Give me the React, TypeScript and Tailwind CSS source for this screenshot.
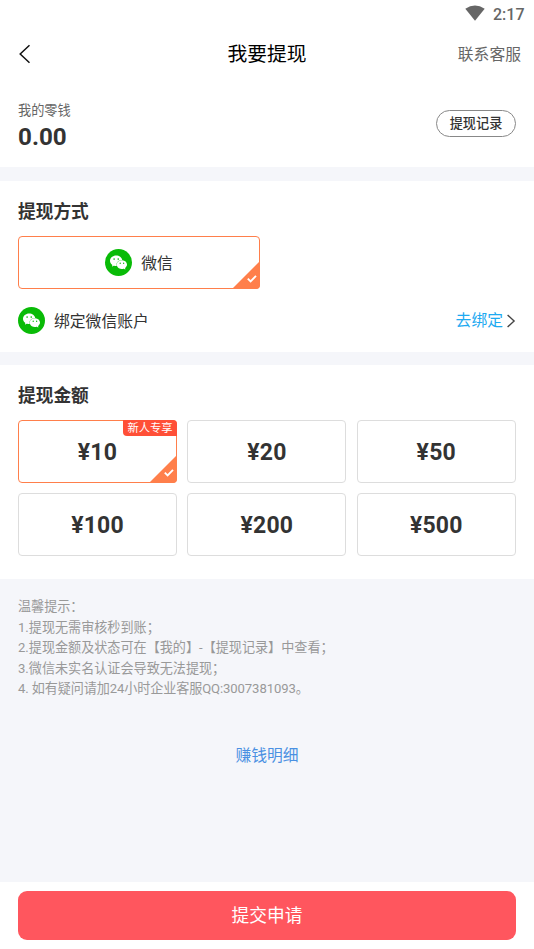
import { SiWechat } from 'react-icons/si';

const amounts = [10, 20, 50, 100, 200, 500];

const tips = [
  '温馨提示：',
  '1.提现无需审核秒到账；',
  '2.提现金额及状态可在【我的】-【提现记录】中查看；',
  '3.微信未实名认证会导致无法提现；',
  '4. 如有疑问请加24小时企业客服QQ:3007381093。',
];

function WechatIcon() {
  return (
    <span className="flex h-[27px] w-[27px] shrink-0 items-center justify-center rounded-full bg-[#09bb07] text-white">
      <SiWechat className="h-[17px] w-[17px]" />
    </span>
  );
}

// Selected marker in the bottom right corner of a card
function CornerCheck() {
  return (
    <svg className="absolute -right-px -bottom-px h-7 w-7" viewBox="0 0 28 28" fill="none">
      <path d="M28 0V24Q28 28 24 28H0Z" fill="#ff7f4b" />
      <path d="M15.8 17.6L18.6 20.4L24 14.9" stroke="#fff" strokeWidth="1.9" />
    </svg>
  );
}

export default function App() {
  return (
    <div className="flex h-[949px] w-[534px] flex-col overflow-hidden bg-white font-['Roboto','Noto_Sans_CJK_SC',sans-serif] text-[#333]">
      {/* Status bar */}
      <div className="flex h-7 shrink-0 items-center justify-end gap-2 pr-[9.5px] text-[#666]">
        <svg className="mb-0.5 h-4 w-5" viewBox="0 0 20 16">
          <path d="M0.3 3.8Q10 -3 19.7 3.8L10 15.8Z" fill="#666" />
        </svg>
        <span className="pt-0.5 text-[16px] leading-7 font-medium">2:17</span>
      </div>

      {/* Header */}
      <header className="grid h-[52px] shrink-0 grid-cols-[1fr_auto_1fr] items-center px-[18px]">
        <button className="w-4">
          <svg className="h-5 w-3" viewBox="0 0 12 20" fill="none">
            <path d="M11.5 1.2L2.2 10L11.5 18.7" stroke="#111" strokeWidth="1.5" />
          </svg>
        </button>
        <h1 className="pt-0.5 text-center text-[19.8px] text-black">我要提现</h1>
        <span className="-mr-[5px] pt-0.5 text-right text-[15.8px] text-[#666]">联系客服</span>
      </header>

      {/* Balance */}
      <section className="flex h-[87px] shrink-0 items-center justify-between px-[18px]">
        <div className="pt-[7px]">
          <p className="text-[13.2px] leading-5 text-[#666]">我的零钱</p>
          <p className="text-[24.2px] leading-[33px] font-bold">0.00</p>
        </div>
        <button className="h-[27px] w-20 rounded-full border border-[#888] text-[13.2px] font-medium">提现记录</button>
      </section>

      <div className="h-[14px] shrink-0 bg-[#f5f6fa]" />

      {/* Method */}
      <section className="h-[171px] shrink-0 px-[18px] pt-[18px]">
        <h2 className="text-[17.7px] leading-[26px] font-bold">提现方式</h2>
        <div className="relative mt-[11px] flex h-[53px] w-[242px] items-center justify-center gap-[9px] rounded border border-[#ff7f4b]">
          <WechatIcon />
          <span className="pt-0.5 text-[15.8px]">微信</span>
          <CornerCheck />
        </div>
        <div className="mt-[18px] flex h-[27px] items-center">
          <WechatIcon />
          <span className="ml-[9px] pt-[3px] text-[15.8px]">绑定微信账户</span>
          <span className="ml-auto text-[15.8px] text-[#1eaaf1]">去绑定</span>
          <svg className="ml-1 h-[14px] w-[9px]" viewBox="0 0 9 14" fill="none">
            <path d="M0.6 1L7.1 7L0.6 13" stroke="#444" strokeWidth="1.4" />
          </svg>
        </div>
      </section>

      <div className="h-[13px] shrink-0 bg-[#f5f6fa]" />

      {/* Amounts */}
      <section className="h-[214px] shrink-0 px-[18px] pt-[18px]">
        <h2 className="text-[17.7px] leading-[26px] font-bold">提现金额</h2>
        <div className="mt-[11px] grid grid-cols-[159px_159px_159px] gap-x-[10.4px] gap-y-[10px]">
          {amounts.map((amount, i) => (
            <div
              key={amount}
              className={`relative flex h-[63px] items-center justify-center rounded border ${i === 0 ? 'border-[#ff7f4b]' : 'border-[#ddd]'}`}
            >
              <span className="pt-[3px] text-[23px] font-bold tracking-[0.2px]">¥{amount}</span>
              {i === 0 && (
                <>
                  <span className="absolute -top-px -right-px h-4 w-[54px] rounded-tr rounded-bl bg-[#ff4f37] text-center text-[11.3px] leading-[17px] text-white">
                    新人专享
                  </span>
                  <CornerCheck />
                </>
              )}
            </div>
          ))}
        </div>
      </section>

      {/* Tips */}
      <section className="flex-1 bg-[#f5f6fa] px-[18px] pt-[18px]">
        <div className="text-[13.1px] leading-[20.5px] text-[#999]">
          {tips.map((tip) => (
            <p key={tip} className="last:tracking-[-0.1px]">{tip}</p>
          ))}
        </div>
        <p className="mt-11 text-center text-[15.8px] leading-6 text-[#4a90e2]">赚钱明细</p>
      </section>

      {/* Submit */}
      <div className="h-[67px] shrink-0 px-[18px] pt-[9px]">
        <button className="h-[49px] w-full rounded-[9px] bg-[#ff565e] pt-0.5 text-[17.7px] text-white">提交申请</button>
      </div>
    </div>
  );
}
